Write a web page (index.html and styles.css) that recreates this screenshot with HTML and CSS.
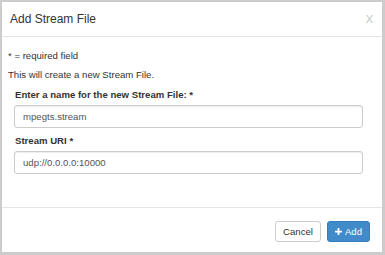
FILE: index.html
```html
<!DOCTYPE html>
<html lang="en">
<head>
    <meta charset="UTF-8">
    <meta name="viewport" content="width=device-width, initial-scale=1.0">
    <title>Add Stream File</title>
    <link rel="stylesheet" href="styles.css">
</head>
<body>
    <div class="modal">
        <div class="modal-header">
            <h4 class="modal-title">Add Stream File</h4>
            <span class="close">X</span>
        </div>

        <div class="modal-body">
            <p class="note">* = required field</p>
            <p class="note">This will create a new Stream File.</p>
            <form class="stream-form">
                <div class="form-group">
                    <label for="streamName">Enter a name for the new Stream File: *</label>
                    <input type="text" id="streamName" class="form-control" value="mpegts.stream">
                </div>
                <div class="form-group">
                    <label for="streamUri">Stream URI *</label>
                    <input type="text" id="streamUri" class="form-control" value="udp://0.0.0.0:10000">
                </div>
            </form>
        </div>

        <div class="modal-footer">
            <button class="btn btn-default">Cancel</button>
            <button class="btn btn-primary">
                <svg class="icon-plus" width="7" height="7" viewBox="0 0 8 8"><path d="M3 0h2v3h3v2H5v3H3V5H0V3h3z" fill="#fff"/></svg>
                Add
            </button>
        </div>
    </div>
</body>
</html>
```

FILE: styles.css
```css
* {
    margin: 0;
    padding: 0;
    box-sizing: border-box;
}

body {
    font-family: 'Liberation Sans', Arial, sans-serif;
    font-size: 9.6px;
    color: #333333;
    background-color: #cccccc;
}

.modal {
    margin: 2px 3px 3px 2px;
    height: 250px;
    background-color: #ffffff;
}

.modal-header {
    height: 35px;
    padding: 0 8px;
    border-bottom: 1px solid #e5e5e5;
    display: flex;
    align-items: center;
    justify-content: space-between;
}

.modal-title {
    font-size: 12px;
    font-weight: 400;
    color: #333333;
}

.close {
    font-size: 11px;
    color: #c4c4c4;
    margin-right: 1px;
}

.modal-body {
    padding: 12px 6px 27px;
}

.note {
    line-height: 14px;
    margin-bottom: 5px;
}

.note + .note {
    margin-bottom: 6px;
}

.stream-form {
    padding: 0 13px 0 6px;
}

.form-group {
    margin-bottom: 6px;
}

label {
    display: block;
    font-weight: 700;
    line-height: 14px;
    margin-bottom: 3px;
    padding-left: 1px;
}

.form-control {
    display: block;
    width: 100%;
    height: 23px;
    padding: 0 8px;
    border: 1px solid #cccccc;
    border-radius: 3px;
    font-family: 'Liberation Sans', Arial, sans-serif;
    font-size: 9.6px;
    color: #555555;
    box-shadow: inset 0 1px 1px rgba(0, 0, 0, 0.075);
}

.modal-footer {
    border-top: 1px solid #e5e5e5;
    padding: 13px 12px 10px;
    display: flex;
    justify-content: flex-end;
    gap: 6px;
}

.btn {
    height: 21px;
    padding: 0 7px;
    border-radius: 3px;
    font-family: 'Liberation Sans', Arial, sans-serif;
    font-size: 9.6px;
    display: flex;
    align-items: center;
    gap: 3px;
}

.btn-default {
    background-color: #ffffff;
    border: 1px solid #cccccc;
    color: #333333;
}

.btn-primary {
    background-color: #428bca;
    border: 1px solid #357ebd;
    color: #ffffff;
}
```
